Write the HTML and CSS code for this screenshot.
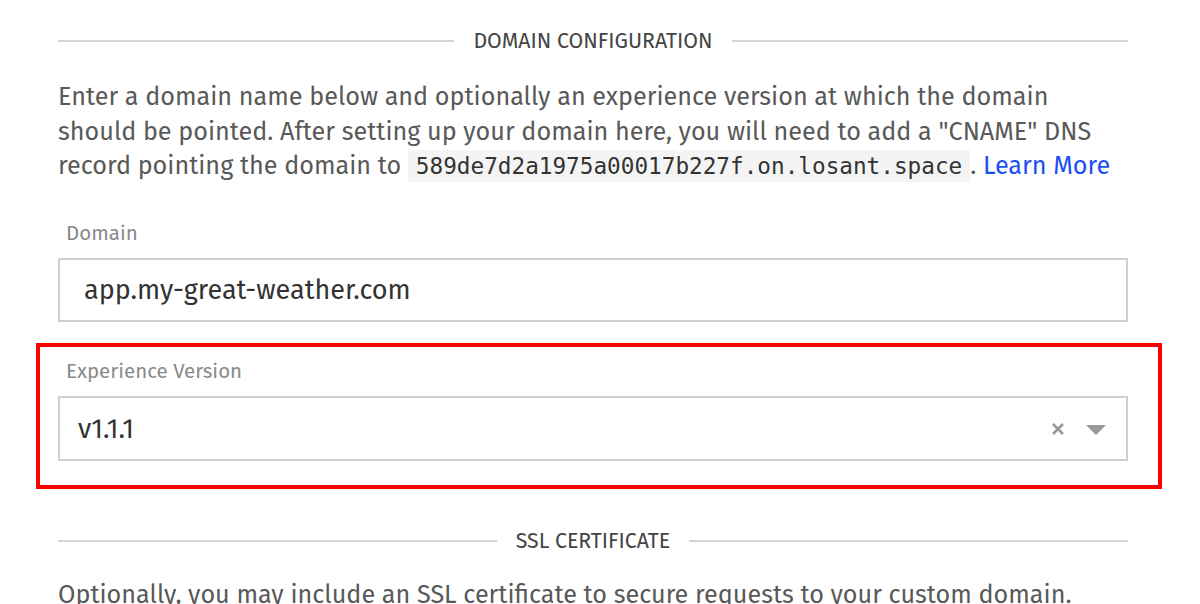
FILE: index.html
```html
<!DOCTYPE html>
<html>
<head>
<meta charset="utf-8">
<link rel="stylesheet" href="styles.css">
</head>
<body>
<div class="page">
  <div class="divider"><span class="divider-text">Domain Configuration</span></div>
  <p class="desc">Enter a domain name below and optionally an experience version at which the domain should be pointed. After setting up your domain here, you will need to add a "CNAME" DNS record pointing the domain to <code class="code">589de7d2a1975a00017b227f.on.losant.space</code>. <a class="link" href="#">Learn More</a></p>

  <div class="field">
    <label class="label">Domain</label>
    <div class="input">app.my-great-weather.com</div>
  </div>

  <div class="field field-version">
    <div class="highlight"></div>
    <label class="label">Experience Version</label>
    <div class="select">
      <span class="select-value">v1.1.1</span>
      <span class="select-icons">
        <svg class="clear" width="14" height="14" viewBox="0 0 14 14"><path d="M2 2 L12 12 M12 2 L2 12" stroke="#999" stroke-width="2.6" stroke-linecap="butt"/></svg>
        <svg class="caret" width="20" height="10" viewBox="0 0 20 10"><path d="M0 0 L20 0 L10 10 Z" fill="#999"/></svg>
      </span>
    </div>
  </div>

  <div class="divider divider-ssl"><span class="divider-text">SSL Certificate</span></div>
  <p class="desc desc-ssl">Optionally, you may include an SSL certificate to secure requests to your custom domain.</p>
</div>
</body>
</html>
```

FILE: styles.css
```css
html, body {
  margin: 0;
  padding: 0;
  background: #fff;
}
body {
  font-family: "Fira Sans", "Open Sans", "Noto Sans", sans-serif;
  color: #555;
  overflow: hidden;
  height: 604px;
}
.page {
  width: 1070px;
  margin-left: 58px;
  padding-top: 28px;
}
.divider {
  display: flex;
  align-items: center;
  gap: 19px;
  height: 26px;
}
.divider::before,
.divider::after {
  content: "";
  flex: 1;
  height: 2px;
  background: #d4d4d4;
}
.divider-text {
  text-transform: uppercase;
  font-size: 21.3px;
  color: #444;
  letter-spacing: 0;
}
.desc {
  margin: 26px 0 0 0;
  font-size: 25.2px;
  line-height: 34.5px;
  color: #595959;
}
.desc-ssl {
  margin-top: 24px;
}
.code {
  font-family: "DejaVu Sans Mono", monospace;
  font-size: 22.7px;
  background: #f4f4f4;
  padding: 3px 8px;
  color: #333;
}
.link {
  color: #1a4ff5;
  text-decoration: none;
}
.field {
  margin-top: 37px;
  position: relative;
}
.label {
  display: block;
  font-size: 20.5px;
  line-height: 24px;
  color: #8a8a8a;
  padding-left: 8px;
  margin-bottom: 13px;
}
.input {
  box-sizing: border-box;
  height: 64px;
  border: 2px solid #d0d0d0;
  padding: 1px 24px 0;
  display: flex;
  align-items: center;
  font-size: 27px;
  color: #333;
}
.field-version {
  margin-top: 37px;
}
.highlight {
  position: absolute;
  left: -22px;
  top: -16px;
  width: 1126px;
  height: 146px;
  box-sizing: border-box;
  border: 4px solid #ff0000;
  pointer-events: none;
}
.select {
  box-sizing: border-box;
  height: 65px;
  border: 2px solid #d0d0d0;
  padding: 2px 20px 0 18px;
  display: flex;
  align-items: center;
  justify-content: space-between;
}
.select-value {
  font-size: 27px;
  color: #333;
}
.select-icons {
  display: flex;
  align-items: center;
  gap: 21px;
}
.caret {
  margin-top: 2px;
}
.divider-ssl {
  margin-top: 67px;
}
```
